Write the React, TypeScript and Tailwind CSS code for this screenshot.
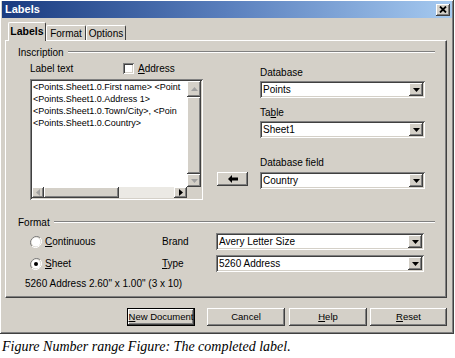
import React from 'react';

const raised = 'shadow-[inset_-1px_-1px_#404040,inset_1px_1px_#ffffff,inset_-2px_-2px_#808080,inset_2px_2px_#d4d0c8]';
const sunken = 'shadow-[inset_1px_1px_#808080,inset_-1px_-1px_#ffffff,inset_2px_2px_#404040,inset_-2px_-2px_#d4d0c8]';

function Combo({ value, w }: { value: string; w: string }) {
  return (
    <div className={`${w} h-[17px] bg-white ${sunken} flex items-center p-[2px]`}>
      <span className="flex-1 pl-[1px] text-[10px] leading-none whitespace-nowrap overflow-hidden">{value}</span>
      <div className={`w-[14px] h-[13px] bg-[#d4d0c8] ${raised} flex items-center justify-center`}>
        <svg width="7" height="4" viewBox="0 0 7 4">
          <path d="M0 0h7L3.5 4z" fill="#000" />
        </svg>
      </div>
    </div>
  );
}

function Legend({ label }: { label: string }) {
  return (
    <div className="flex items-center h-[12px] pl-[12px] pr-[11px]">
      <span>{label}</span>
      <div className="flex-1 ml-[4px] h-[2px] border-t border-t-[#808080] border-b border-b-white" />
    </div>
  );
}

function Radio({ checked }: { checked?: boolean }) {
  return (
    <svg width="12" height="12" viewBox="0 0 12 12">
      <path d="M10.2 1.8A6 6 0 0 0 1.8 10.2" stroke="#808080" fill="none" />
      <path d="M1.8 10.2A6 6 0 0 0 10.2 1.8" stroke="#ffffff" fill="none" />
      <circle cx="6" cy="6" r="4.5" fill="#fff" />
      {checked && <circle cx="6" cy="6" r="2" fill="#000" />}
    </svg>
  );
}

function Btn({ w, children, def }: { w: string; children: React.ReactNode; def?: boolean }) {
  return (
    <div className={`${w} h-[18px] bg-[#d4d0c8] ${def ? 'border border-black' : ''} ${raised} flex items-center justify-center whitespace-nowrap text-[9.5px]`}>
      {children}
    </div>
  );
}

export default function App() {
  return (
    <div className="w-[455px] h-[358px] bg-white font-['Liberation_Sans',Arial,sans-serif] text-[10px] text-black">
      <div className={`w-[454px] h-[334px] bg-[#d4d0c8] pt-[1px] px-[2px] ${raised}`}>
        {/* title bar */}
        <div className="h-[17px] bg-gradient-to-r from-[#1a3b80] via-[#5a7fbd] to-[#a6caf0] flex items-center pl-[3px] pr-[2px]">
          <span className="flex-1 text-white font-bold text-[11px]">Labels</span>
          <div className={`w-[14px] h-[12px] bg-[#d4d0c8] ${raised} flex items-center justify-center`}>
            <svg width="8" height="7" viewBox="0 0 8 7">
              <path d="M1 0.5L7 6.5M7 0.5L1 6.5" stroke="#000" strokeWidth="1.8" />
            </svg>
          </div>
        </div>

        {/* tabs */}
        <div className="flex items-end h-[18px] mt-[4px] pl-[6px]">
          <div className="relative z-10 w-[38px] h-[19px] -mb-[1px] bg-[#d4d0c8] border-t border-l border-white border-r border-r-[#404040] rounded-t-[2px] flex items-center justify-center font-bold text-[10.5px]">
            Labels
          </div>
          <div className="w-[40px] h-[15px] border-t border-l border-white border-r border-r-[#404040] rounded-t-[2px] flex items-center justify-center">
            Format
          </div>
          <div className="w-[40px] h-[15px] border-t border-l border-white border-r border-r-[#404040] rounded-t-[2px] flex items-center justify-center">
            Options
          </div>
        </div>

        {/* panel */}
        <div className="ml-[3px] w-[442px] h-[258px] border-l border-t border-white border-r border-b border-r-[#404040] border-b-[#404040] shadow-[inset_-1px_-1px_#808080]">
          <div className="mt-[5px]">
            <Legend label="Inscription" />
          </div>
          <div className="flex mt-[4px] pl-[24px]">
            <div className="w-[173px]">
              <div className="h-[13px] flex items-center">
                <span className="w-[93px]">Label text</span>
                <div className={`w-[11px] h-[11px] bg-white ${sunken}`} />
                <span className="ml-[4px]"><span className="underline">A</span>ddress</span>
              </div>
              <div className={`mt-[4px] h-[121px] bg-white ${sunken} p-[2px] flex flex-col`}>
                <div className="flex-1 flex min-h-0">
                  <div className="flex-1 overflow-hidden whitespace-nowrap pl-[1px] text-[9px] leading-[12px]">
                    <div>&lt;Points.Sheet1.0.First name&gt; &lt;Point</div>
                    <div>&lt;Points.Sheet1.0.Address 1&gt;</div>
                    <div>&lt;Points.Sheet1.0.Town/City&gt;, &lt;Poin</div>
                    <div>&lt;Points.Sheet1.0.Country&gt;</div>
                  </div>
                  <div className="w-[14px] flex flex-col">
                    <div className={`h-[16px] bg-[#d4d0c8] ${raised} flex items-center justify-center`}>
                      <svg width="7" height="4" viewBox="0 0 7 4"><path d="M0 4h7L3.5 0z" fill="#a0a0a0" /></svg>
                    </div>
                    <div className={`flex-1 bg-[#d4d0c8] ${raised}`} />
                    <div className={`h-[13px] bg-[#d4d0c8] ${raised} flex items-center justify-center`}>
                      <svg width="7" height="4" viewBox="0 0 7 4"><path d="M0 0h7L3.5 4z" fill="#a0a0a0" /></svg>
                    </div>
                  </div>
                </div>
                <div className="h-[11px] flex">
                  <div className={`w-[12px] bg-[#d4d0c8] ${raised} flex items-center justify-center`}>
                    <svg width="4" height="7" viewBox="0 0 4 7"><path d="M4 0v7L0 3.5z" fill="#a0a0a0" /></svg>
                  </div>
                  <div className={`w-[75px] bg-[#d4d0c8] ${raised}`} />
                  <div className="flex-1 bg-[#ebe9e4]" />
                  <div className={`w-[13px] bg-[#d4d0c8] ${raised} flex items-center justify-center`}>
                    <svg width="4" height="7" viewBox="0 0 4 7"><path d="M0 0v7L4 3.5z" fill="#000" /></svg>
                  </div>
                  <div className="w-[14px] bg-[#d4d0c8]" />
                </div>
              </div>
            </div>

            <div className="ml-[14px] mt-[110px]">
              <div className={`w-[31px] h-[14px] bg-[#d4d0c8] ${raised} flex items-center justify-center`}>
                <svg width="10" height="8" viewBox="0 0 10 8">
                  <path d="M0 4L4 0v2.5h6v3H4V8z" fill="#000" />
                </svg>
              </div>
            </div>

            <div className="ml-[12px] w-[165px]">
              <div className="mt-[4px] h-[13px] flex items-center">Database</div>
              <div className="mt-[2px]"><Combo value="Points" w="w-[165px]" /></div>
              <div className="mt-[8px] h-[13px] flex items-center">Ta<span className="underline">b</span>le</div>
              <div className="mt-[2px]"><Combo value="Sheet1" w="w-[165px]" /></div>
              <div className="mt-[18px] h-[13px] flex items-center">Database field</div>
              <div className="mt-[3px]"><Combo value="Country" w="w-[165px]" /></div>
            </div>
          </div>

          <div className="mt-[16px]">
            <Legend label="Format" />
          </div>
          <div className="mt-[5px] h-[17px] flex items-center pl-[24px]">
            <div className="w-[132px] flex items-center">
              <Radio />
              <span className="ml-[3px]"><span className="underline">C</span>ontinuous</span>
            </div>
            <span className="w-[54px]">Brand</span>
            <Combo value="Avery Letter Size" w="w-[208px]" />
          </div>
          <div className="mt-[5px] h-[17px] flex items-center pl-[24px]">
            <div className="w-[132px] flex items-center">
              <Radio checked />
              <span className="ml-[3px]"><span className="underline">S</span>heet</span>
            </div>
            <span className="w-[54px]"><span className="underline">T</span>ype</span>
            <Combo value="5260 Address" w="w-[208px]" />
          </div>
          <div className="mt-[5px] h-[12px] flex items-center pl-[19px]">
            5260 Address 2.60" x 1.00" (3 x 10)
          </div>
        </div>

        {/* buttons */}
        <div className="flex mt-[10px] pl-[125px]">
          <Btn w="w-[68px]" def><span><span className="underline">N</span>ew Document</span></Btn>
          <div className="ml-[12px]"><Btn w="w-[78px]">Cancel</Btn></div>
          <div className="ml-[4px]"><Btn w="w-[78px]"><span><span className="underline">H</span>elp</span></Btn></div>
          <div className="ml-[3px]"><Btn w="w-[77px]"><span><span className="underline">R</span>eset</span></Btn></div>
        </div>
      </div>
      <div className="mt-[4px] pl-[2px] h-[18px] leading-[18px] italic text-[14px] font-['Liberation_Serif','Times_New_Roman',serif]">
        Figure Number range Figure: The completed label.
      </div>
    </div>
  );
}
